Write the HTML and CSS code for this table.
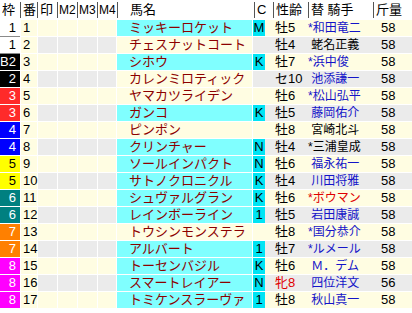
FILE: index.html
```html
<!DOCTYPE html>
<html lang="ja">
<head>
<meta charset="utf-8">
<title>出馬表</title>
<link rel="stylesheet" href="styles.css">
</head>
<body>
<div class="table">
  <div class="hdr">
    <span class="h">枠</span>
    <span class="h s">番</span>
    <span class="h s">印</span>
    <span class="h s hm">M2</span>
    <span class="h s hm">M3</span>
    <span class="h s hm">M4</span>
    <span class="h s hname">馬名</span>
    <span class="h s">C</span>
    <span class="h s">性齢</span>
    <span class="h s">替 騎手</span>
    <span class="h s">斤量</span>
  </div>

  <div class="row odd"><span class="waku w1">1</span><span class="ban">1</span><span class="mk"></span><span class="mk"></span><span class="mk"></span><span class="mk m4"></span><span class="name cy">ミッキーロケット</span><span class="c on">M</span><span class="sa">牡5</span><span class="jk blue">*和田竜二</span><span class="kin">58</span></div>
  <div class="row even"><span class="waku w1">1</span><span class="ban">2</span><span class="mk"></span><span class="mk"></span><span class="mk"></span><span class="mk m4"></span><span class="name">チェスナットコート</span><span class="c"></span><span class="sa">牡4</span><span class="jk black">&nbsp;蛯名正義</span><span class="kin">58</span></div>
  <div class="row odd"><span class="waku w2">B2</span><span class="ban">3</span><span class="mk"></span><span class="mk"></span><span class="mk"></span><span class="mk m4"></span><span class="name cy">シホウ</span><span class="c on">K</span><span class="sa">牡7</span><span class="jk blue">*浜中俊</span><span class="kin">58</span></div>
  <div class="row even"><span class="waku w2">2</span><span class="ban">4</span><span class="mk"></span><span class="mk"></span><span class="mk"></span><span class="mk m4"></span><span class="name">カレンミロティック</span><span class="c"></span><span class="sa">セ10</span><span class="jk blue">&nbsp;池添謙一</span><span class="kin">58</span></div>
  <div class="row odd"><span class="waku w3">3</span><span class="ban">5</span><span class="mk"></span><span class="mk"></span><span class="mk"></span><span class="mk m4"></span><span class="name">ヤマカツライデン</span><span class="c"></span><span class="sa">牡6</span><span class="jk blue">*松山弘平</span><span class="kin">58</span></div>
  <div class="row even"><span class="waku w3">3</span><span class="ban">6</span><span class="mk"></span><span class="mk"></span><span class="mk"></span><span class="mk m4"></span><span class="name cy">ガンコ</span><span class="c on">K</span><span class="sa">牡5</span><span class="jk blue">&nbsp;藤岡佑介</span><span class="kin">58</span></div>
  <div class="row odd"><span class="waku w4">4</span><span class="ban">7</span><span class="mk"></span><span class="mk"></span><span class="mk"></span><span class="mk m4"></span><span class="name">ピンポン</span><span class="c"></span><span class="sa">牡8</span><span class="jk black">&nbsp;宮崎北斗</span><span class="kin">58</span></div>
  <div class="row even"><span class="waku w4">4</span><span class="ban">8</span><span class="mk"></span><span class="mk"></span><span class="mk"></span><span class="mk m4"></span><span class="name cy">クリンチャー</span><span class="c on">N</span><span class="sa">牡4</span><span class="jk black">*三浦皇成</span><span class="kin">58</span></div>
  <div class="row odd"><span class="waku w5">5</span><span class="ban">9</span><span class="mk"></span><span class="mk"></span><span class="mk"></span><span class="mk m4"></span><span class="name cy">ソールインパクト</span><span class="c on">N</span><span class="sa">牡6</span><span class="jk blue">&nbsp;福永祐一</span><span class="kin">58</span></div>
  <div class="row even"><span class="waku w5">5</span><span class="ban">10</span><span class="mk"></span><span class="mk"></span><span class="mk"></span><span class="mk m4"></span><span class="name cy">サトノクロニクル</span><span class="c on">K</span><span class="sa">牡4</span><span class="jk blue">&nbsp;川田将雅</span><span class="kin">58</span></div>
  <div class="row odd"><span class="waku w6">6</span><span class="ban">11</span><span class="mk"></span><span class="mk"></span><span class="mk"></span><span class="mk m4"></span><span class="name cy">シュヴァルグラン</span><span class="c on">K</span><span class="sa">牡6</span><span class="jk red">*ボウマン</span><span class="kin">58</span></div>
  <div class="row even"><span class="waku w6">6</span><span class="ban">12</span><span class="mk"></span><span class="mk"></span><span class="mk"></span><span class="mk m4"></span><span class="name cy">レインボーライン</span><span class="c on">1</span><span class="sa">牡5</span><span class="jk blue">&nbsp;岩田康誠</span><span class="kin">58</span></div>
  <div class="row odd"><span class="waku w7">7</span><span class="ban">13</span><span class="mk"></span><span class="mk"></span><span class="mk"></span><span class="mk m4"></span><span class="name">トウシンモンステラ</span><span class="c"></span><span class="sa">牡8</span><span class="jk blue">*国分恭介</span><span class="kin">58</span></div>
  <div class="row even"><span class="waku w7">7</span><span class="ban">14</span><span class="mk"></span><span class="mk"></span><span class="mk"></span><span class="mk m4"></span><span class="name cy">アルバート</span><span class="c on">1</span><span class="sa">牡7</span><span class="jk blue">*ルメール</span><span class="kin">58</span></div>
  <div class="row odd"><span class="waku w8">8</span><span class="ban">15</span><span class="mk"></span><span class="mk"></span><span class="mk"></span><span class="mk m4"></span><span class="name cy">トーセンバジル</span><span class="c on">K</span><span class="sa">牡6</span><span class="jk blue">&nbsp;Ｍ．デム</span><span class="kin">58</span></div>
  <div class="row even"><span class="waku w8">8</span><span class="ban">16</span><span class="mk"></span><span class="mk"></span><span class="mk"></span><span class="mk m4"></span><span class="name cy">スマートレイアー</span><span class="c on">N</span><span class="sa red">牝8</span><span class="jk blue">&nbsp;四位洋文</span><span class="kin">56</span></div>
  <div class="row odd"><span class="waku w8">8</span><span class="ban">17</span><span class="mk"></span><span class="mk"></span><span class="mk"></span><span class="mk m4"></span><span class="name cy">トミケンスラーヴァ</span><span class="c on">1</span><span class="sa">牡8</span><span class="jk blue">&nbsp;秋山真一</span><span class="kin">58</span></div>
</div>
</body>
</html>
```

FILE: styles.css
```css
html, body {
  margin: 0;
  padding: 0;
  background: #ffffff;
}

body {
  font-family: "Liberation Sans", "Noto Sans CJK JP", sans-serif;
  font-size: 12px;
  color: #000000;
}

.table {
  width: 412px;
}

/* header */
.hdr {
  display: grid;
  grid-template-columns: 20px 17px 20px 20px 20px 20px 137px 19px 35px 65px 39px;
  height: 20px;
  align-items: center;
}

.h {
  font-size: 13px;
  line-height: 16px;
  white-space: nowrap;
  padding-left: 2px;
}

.hm {
  font-size: 12px;
  padding-left: 1px;
}

.s {
  border-left: 1px solid #555555;
}

.hname {
  padding-left: 12px;
}

/* data rows */
.row {
  display: flex;
  height: 16px;
  margin-bottom: 1px;
  line-height: 16px;
  white-space: nowrap;
}

.row > span {
  flex: none;
  box-sizing: border-box;
}

.waku {
  width: 20px;
  margin-right: 1px;
  text-align: right;
  padding-right: 4px;
  font-size: 13px;
  color: #ffffff;
}

.w1 { background: #ffffff; color: #000000; box-shadow: 0 1px 0 #8a8a8a; }
.w2 { background: #000000; }
.w3 { background: #ff2a2a; }
.w4 { background: #0000ff; }
.w5 { background: #ffff00; color: #000000; }
.w6 { background: #008080; }
.w7 { background: #ff8000; }
.w8 { background: #ff00ff; }

.ban {
  width: 16px;
  margin-right: 1px;
  padding-left: 2px;
  background: #fffde2;
  font-size: 13px;
}

.mk {
  width: 19px;
  margin-right: 1px;
}

.m4 {
  width: 18px;
}

.name {
  width: 135px;
  margin-right: 1px;
  padding-left: 12px;
  background: #fffde2;
  color: #8c0000;
  font-size: 13px;
}

.name.cy {
  background: #80ffff;
}

.c {
  width: 12px;
  text-align: center;
  font-size: 13px;
}

.sa {
  width: 43px;
  padding-left: 10px;
  font-size: 13px;
}

.jk {
  width: 65px;
  font-size: 12px;
}

.kin {
  width: 39px;
  padding-left: 8px;
  font-size: 13px;
}

/* row striping */
.odd .mk,
.odd .c,
.odd .sa,
.odd .jk,
.odd .kin {
  background: #fffde2;
}

.even .mk,
.even .c,
.even .sa,
.even .jk,
.even .kin {
  background: #ebebeb;
}

.row .c.on {
  background: #00e4f4;
}

.blue { color: #1414c8; }
.black { color: #000000; }
.red { color: #e00000; }
```
